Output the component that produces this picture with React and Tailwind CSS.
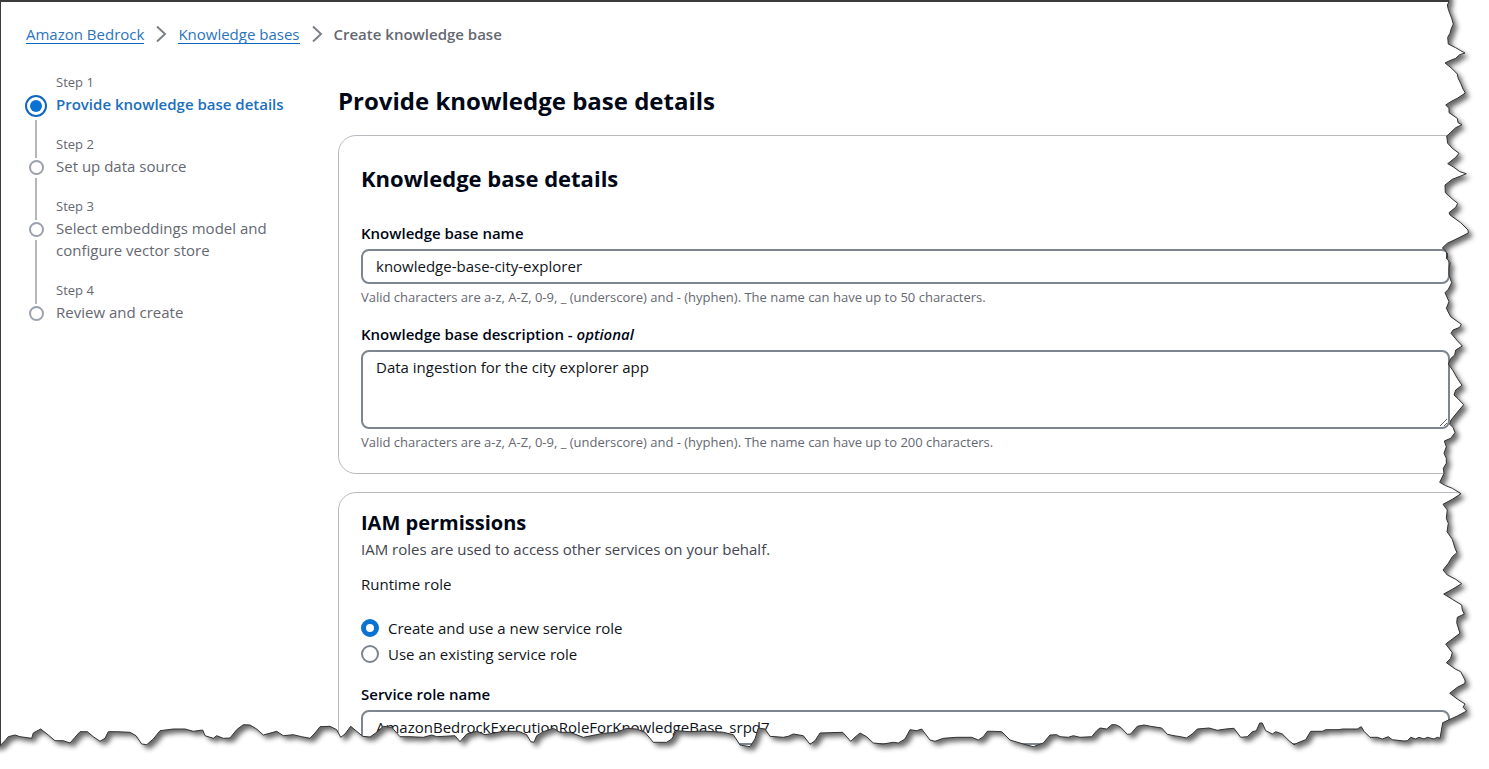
import React from "react";

const steps = [
  { label: "Step 1", title: "Provide knowledge base details" },
  { label: "Step 2", title: "Set up data source" },
  { label: "Step 3", title: "Select embeddings model and configure vector store" },
  { label: "Step 4", title: "Review and create" },
];

// Torn paper edge, listed in runs of points (three units to a pixel) with each run's origin.
const tornRuns = [
  [1389, 0, [180,5,175,15,178,28,182,40,188,55,193,72,186,88,183,100,176,112,178,132,200,143,215,152,228,159,212,164,200,175,180,183,168,189,188,205,205,222,208,236,215,250,222,267,229,279,205,295,185,305,170,315,180,325,180,338,205,355,207,368,219,374,200,383,180,402,173,408,176,430,190,445,210,460,200,472,176,491,195,502,212,515,232,521,215,528,190,538,168,555,169,578,190,597,206,610,200,622,180,638,183,645,215,668,237,690,238,699,210,713,175,730,160,744,172,755,175,775]],
  [1389, 250, [175,10,172,25,184,38,180,55,180,75,188,98,178,118,168,128,180,155,172,175,185,200,217,223,212,232,192,240,186,250,205,272,220,288,200,300,197,315,186,325,178,342,192,362,205,385,219,406,200,420,195,435,208,447,224,464,205,487,186,510,182,523,192,532,198,548,185,565,166,573,172,590,165,610,172,625,172,640,163,655,165,670,152,697,170,707,190,715,216,731,190,748,162,763]],
  [1389, 500, [162,13,175,30,172,55,178,70,174,95,190,118,198,145,204,158,190,170,178,190,162,210,175,225,200,238,218,251,190,268,164,282,190,298,218,315,220,330,226,342,205,352,203,368,213,400,190,417,170,432,190,458,185,475,172,488,200,508,215,515,228,540,228,550,205,562,182,580,205,597,228,612,222,622,233,633,205,648,161,668]],
  [1109, 669, [993,208,985,205,975,210,955,205,945,210,930,205,920,210,905,205,895,215,885,216,850,212,838,203,820,210,805,205,783,205,765,187,757,173,745,180,700,180,690,182,650,182,640,187,605,187,590,212,570,220,555,227,540,215,520,195,500,188,490,195,470,185,460,162,452,162,442,185,430,188,415,203,395,205,375,178,350,180,325,184,300,177,265,180,250,195,232,207,215,203,195,200,175,196,158,177,125,172,105,168,85,172,65,195,55,196,35,175,20,167]],
  [740, 669, [1115,167,1100,180,1080,177,1070,185,1055,203,1020,205,1000,200,985,205,960,203,950,197,930,198,910,222,880,233,850,225,810,213,785,188,760,187,742,187,730,203,715,213,695,205,650,205,610,208,585,217,570,213,545,180,530,185,510,182,495,210,475,222,460,220,430,225,400,222,380,203,360,192,350,200,332,217,308,190,240,192,225,215,210,226,190,200,160,195,145,202,130,205,90,202,75,180,55,177,45,210,30,233]],
  [370, 669, [1110,228,1090,197,1060,190,1000,186,960,188,920,185,905,210,890,220,850,220,825,190,800,180,770,178,740,190,700,193,640,205,600,190,570,190,550,178,520,188,500,200,492,220,482,218,470,197,445,187,400,187,345,197,320,187,290,195,270,218,255,200,200,203,185,198,160,205,120,203,90,203,65,175,40,172,20,190]],
  [0, 669, [1110,204,1088,202,1070,187,1052,172,1035,195,1022,205,1010,182,990,172,960,173,945,192,930,208,905,203,880,197,850,200,830,187,790,198,770,180,750,168,730,167,710,182,690,207,670,208,650,200,640,208,615,200,608,183,580,187,555,180,520,180,480,185,460,210,440,227,425,225,408,200,390,190,350,188,325,188,315,208,300,217,280,203,262,188,240,188,225,205,210,222,190,215,165,215,145,198,122,180,100,192,95,208,60,203,45,198,25,203,15,215,0,230]],
];

const tornEdge =
  "M" +
  tornRuns
    .flatMap(([ox, oy, pts]) =>
      Array.from({ length: pts.length / 2 }, (_, i) =>
        `${(ox + pts[2 * i] / 3).toFixed(1)} ${(oy + pts[2 * i + 1] / 3).toFixed(1)}`
      )
    )
    .join("L");
const paper = `${tornEdge}L-30 746L-30 -30L1449 -30Z`;

function TornEdge() {
  return (
    <svg
      className="pointer-events-none absolute inset-0 h-full w-full"
      viewBox="0 0 1489 769"
      preserveAspectRatio="none"
      aria-hidden="true"
    >
      <defs>
        <clipPath id="outside">
          <path clipRule="evenodd" d={`M-40 -40H1530V810H-40Z${paper}`} />
        </clipPath>
        <filter id="soft" x="-5%" y="-5%" width="110%" height="110%">
          <feGaussianBlur stdDeviation="2.8" />
        </filter>
      </defs>
      <g clipPath="url(#outside)">
        <rect width="1489" height="769" fill="#fff" />
        <path d={paper} transform="translate(4 4)" fill="#2a2a2a" opacity="0.7" filter="url(#soft)" />
      </g>
      <path d={tornEdge} fill="none" stroke="#333" strokeWidth="1" />
      <path d="M0 1H1449" stroke="#3d3a3c" strokeWidth="2" />
      <path d="M0.5 0V746" stroke="#3d3a3c" strokeWidth="1" />
    </svg>
  );
}

function Chevron() {
  return (
    <svg className="h-5 w-3 shrink-0" viewBox="0 0 12 20" fill="none" stroke="#7d8087" strokeWidth="2" aria-hidden="true">
      <path d="M2 2.5L10 10L2 17.5" />
    </svg>
  );
}

function Step({ step, first, last }) {
  return (
    <li className="flex gap-[9px]" aria-current={first ? "step" : undefined}>
      <div className="flex w-[22px] shrink-0 flex-col items-center">
        <span className={first ? "h-6" : "mb-0.5 h-[25px] w-0.5 bg-[#b4b4bb]"} />
        {first ? (
          <span className="flex size-[22px] shrink-0 items-center justify-center rounded-full border-2 border-[#0f68bd]">
            <span className="size-3 rounded-full bg-[#0972d3]" />
          </span>
        ) : (
          <span className="size-[15px] shrink-0 rounded-full border-2 border-[#9ba0ad]" />
        )}
        {!last && <span className="mt-[3px] w-0.5 flex-1 bg-[#b4b4bb]" />}
      </div>
      <div className="pb-[18px]">
        <div className="text-[13px] leading-[22px] text-[#656871]">{step.label}</div>
        <div className={first ? "text-[15px] leading-[22px] font-semibold text-[#1a6fc0]" : "text-[15px] leading-[22px] text-[#656871]"}>
          {step.title}
        </div>
      </div>
    </li>
  );
}

const linkStyle = "block border-b border-[#0f68bd] text-[15px] leading-[18px] text-[#2a74bd]";
const labelStyle = "block text-[15px] leading-[22px] font-semibold text-[#000716]";
const hintStyle = "mt-1 text-[13px] leading-[18px] text-[#656871]";
const fieldStyle = "mt-[5px] block w-full rounded-lg border-2 border-[#7d858f] bg-white px-[13px] text-[15px] text-[#0f141a]";
const cardStyle = "rounded-[18px] border border-[#b8babf] px-[22px]";
const radioStyle = "size-[18px] appearance-none rounded-full border-2 border-[#7d858f] checked:border-[5px] checked:border-[#0972d3]";

export default function App() {
  return (
    <div className="relative h-screen overflow-hidden bg-white font-['Open_Sans','Noto_Sans',sans-serif]">
      <nav aria-label="Breadcrumbs" className="pt-6 pl-[26px]">
        <ol className="flex h-5 items-center gap-[11px]">
          <li><a href="#bedrock" className={linkStyle}>Amazon Bedrock</a></li>
          <li><Chevron /></li>
          <li><a href="#bases" className={linkStyle}>Knowledge bases</a></li>
          <li><Chevron /></li>
          <li className="text-[15px] leading-[18px] font-semibold text-[#656871]">Create knowledge base</li>
        </ol>
      </nav>

      <div className="flex pr-4 pl-[25px]">
        <ol className="w-[313px] shrink-0 pt-[27px] pr-10">
          {steps.map((step, i) => (
            <Step key={step.label} step={step} first={i === 0} last={i === steps.length - 1} />
          ))}
        </ol>

        <main className="min-w-0 flex-1 pt-[41px]">
          <h1 className="text-2xl leading-8 font-bold text-[#000716]">Provide knowledge base details</h1>

          <section className={`${cardStyle} mt-[18px] pt-[27px] pb-[22px]`}>
            <h2 className="text-[22px] leading-[30px] font-bold text-[#000716]">Knowledge base details</h2>
            <label htmlFor="name" className={`${labelStyle} mt-[29px]`}>Knowledge base name</label>
            <input id="name" className={`${fieldStyle} h-[35px] pb-0.5`} defaultValue="knowledge-base-city-explorer" />
            <p className={hintStyle}>Valid characters are a-z, A-Z, 0-9, _ (underscore) and - (hyphen). The name can have up to 50 characters.</p>
            <label htmlFor="description" className={`${labelStyle} mt-[17px]`}>
              Knowledge base description - <em>optional</em>
            </label>
            <textarea id="description" className={`${fieldStyle} h-[79px] py-1 leading-[22px]`} defaultValue="Data ingestion for the city explorer app" />
            <p className={hintStyle}>Valid characters are a-z, A-Z, 0-9, _ (underscore) and - (hyphen). The name can have up to 200 characters.</p>
          </section>

          <section className={`${cardStyle} mt-[18px] pt-[15px] pb-6`}>
            <h2 className="text-xl leading-[30px] font-bold text-[#000716]">IAM permissions</h2>
            <p className="text-[15px] leading-[22px] text-[#424650]">IAM roles are used to access other services on your behalf.</p>
            <fieldset className="mt-[13px]">
              <legend className="text-[15px] leading-[22px] text-[#0f141a]">Runtime role</legend>
              <div className="mt-[22px] flex flex-col gap-1">
                <label className="flex items-center gap-[9px] text-[15px] leading-[22px] text-[#0f141a]">
                  <input type="radio" name="role" defaultChecked className={radioStyle} />
                  Create and use a new service role
                </label>
                <label className="flex items-center gap-[9px] text-[15px] leading-[22px] text-[#0f141a]">
                  <input type="radio" name="role" className={radioStyle} />
                  Use an existing service role
                </label>
              </div>
            </fieldset>
            <label htmlFor="role-name" className={`${labelStyle} mt-[18px]`}>Service role name</label>
            <input id="role-name" className={`${fieldStyle} h-[35px] pb-0.5`} defaultValue="AmazonBedrockExecutionRoleForKnowledgeBase_srpd7" />
          </section>
        </main>
      </div>
      <TornEdge />
    </div>
  );
}
